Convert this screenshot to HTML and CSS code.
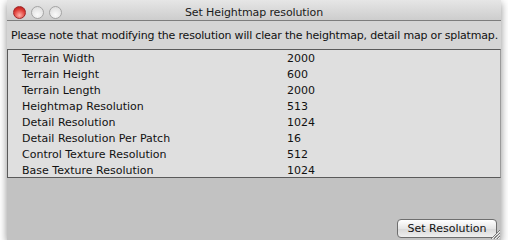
FILE: index.html
```html
<!DOCTYPE html>
<html lang="en">
<head>
    <meta charset="UTF-8">
    <title>Set Heightmap resolution</title>
    <link rel="stylesheet" href="styles.css">
</head>
<body>
    <div class="window">
        <div class="titlebar">
            <div class="lights">
                <span class="light close"></span>
                <span class="light"></span>
                <span class="light"></span>
            </div>
            <div class="title">Set Heightmap resolution</div>
        </div>

        <div class="notice">Please note that modifying the resolution will clear the heightmap, detail map or splatmap.</div>

        <div class="settings">
            <div class="row"><span class="label">Terrain Width</span><span class="value">2000</span></div>
            <div class="row"><span class="label">Terrain Height</span><span class="value">600</span></div>
            <div class="row"><span class="label">Terrain Length</span><span class="value">2000</span></div>
            <div class="row"><span class="label">Heightmap Resolution</span><span class="value">513</span></div>
            <div class="row"><span class="label">Detail Resolution</span><span class="value">1024</span></div>
            <div class="row"><span class="label">Detail Resolution Per Patch</span><span class="value">16</span></div>
            <div class="row"><span class="label">Control Texture Resolution</span><span class="value">512</span></div>
            <div class="row"><span class="label">Base Texture Resolution</span><span class="value">1024</span></div>
        </div>

        <div class="footer">
            <button class="btn">Set Resolution</button>
            <svg class="grip" width="10" height="10" viewBox="0 0 10 10">
                <path d="M10 1 L1 10 M10 4 L4 10 M10 7 L7 10" stroke="#7a7a7a" stroke-width="1"/>
                <path d="M10 2 L2 10 M10 5 L5 10 M10 8 L8 10" stroke="#f0f0f0" stroke-width="1"/>
            </svg>
        </div>
    </div>
</body>
</html>
```

FILE: styles.css
```css
body {
    margin: 0;
    background-color: #fff;
    font-family: "DejaVu Sans", sans-serif;
    font-size: 11px;
    color: #111;
}

.window {
    width: 494px;
    height: 240px;
    margin-left: 7px;
    display: flex;
    flex-direction: column;
    background-color: #c2c2c2;
    box-shadow: 0 3px 8px rgba(0, 0, 0, 0.45);
}

.titlebar {
    position: relative;
    height: 20px;
    padding-top: 0;
    border-bottom: 1px solid #7d7d7d;
    background: linear-gradient(#e6e6e6, #cdcdcd);
    display: flex;
    align-items: center;
    justify-content: center;
}

.lights {
    position: absolute;
    left: 6px;
    top: 6px;
    display: flex;
    gap: 5px;
}

.light {
    width: 13px;
    height: 13px;
    border-radius: 50%;
    border: 1px solid #a4a4a4;
    box-sizing: border-box;
    background: radial-gradient(circle at 50% 70%, #fafafa, #d8d8d8);
}

.light.close {
    border-color: #a0282a;
    background: radial-gradient(circle at 50% 75%, #ffb0a8, #e0403a 55%, #b0100e);
}

.title {
    margin-top: 4px;
    font-size: 11px;
    letter-spacing: -0.1px;
    color: #1a1a1a;
}

.notice {
    height: 28px;
    padding: 0 4px;
    display: flex;
    align-items: center;
    background-color: #d5d5d5;
    font-size: 11px;
    white-space: nowrap;
    letter-spacing: -0.18px;
}

.settings {
    border: 1px solid #5a5a5a;
    border-right-color: #9a9a9a;
    background-color: #dfdfdf;
}

.row {
    display: flex;
    height: 16px;
    padding-top: 1px;
    box-sizing: border-box;
    align-items: center;
}

.row:last-child {
    height: 15px;
}

.label {
    width: 265px;
    padding-left: 14px;
}

.footer {
    position: relative;
    flex: 1;
    display: flex;
    justify-content: flex-end;
    align-items: flex-end;
    padding: 0 4px 2px 0;
}

.btn {
    width: 100px;
    height: 19px;
    padding: 0;
    font-family: "DejaVu Sans", sans-serif;
    font-size: 11px;
    color: #111;
    border: 1px solid #6e6e6e;
    border-radius: 4px;
    background: linear-gradient(#ffffff, #e6e6e6 50%, #d8d8d8 51%, #efefef);
}

.grip {
    position: absolute;
    right: 1px;
    bottom: 1px;
}
```
